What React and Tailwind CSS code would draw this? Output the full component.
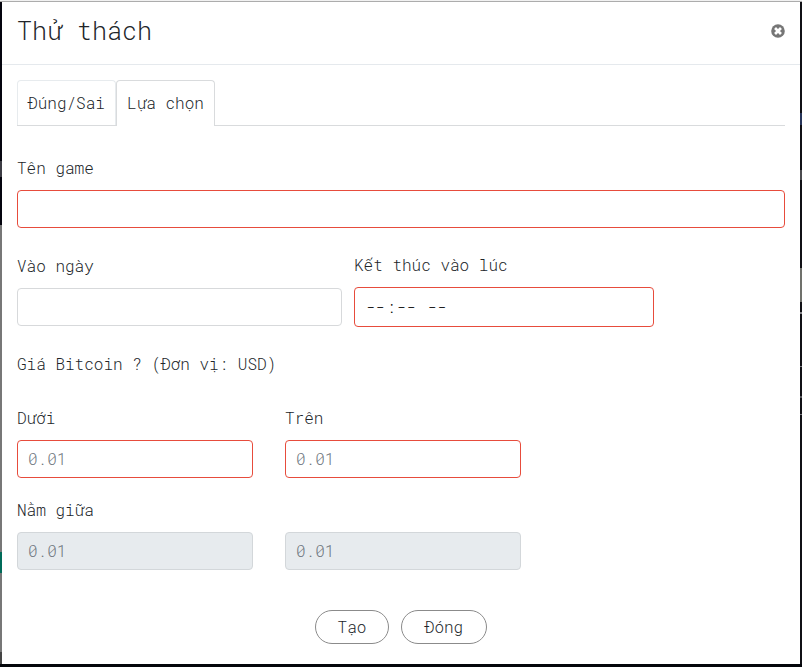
const fieldBase = "h-[38px] rounded-[4px] border px-[10px] pb-[2px] text-base outline-none placeholder:text-[#6c757d] placeholder:opacity-100";

function Field({ label, invalid = false, disabled = false, placeholder, className }) {
  const tone = disabled
    ? "border-[#d3d7da] bg-[#e7ebee]"
    : invalid
      ? "border-[#e74c3c] bg-white"
      : "border-[#d7d9db] bg-white";
  return (
    <label className={`flex flex-col ${className}`}>
      <span className="mb-[10px] h-6 leading-6 whitespace-pre">{label}</span>
      <input
        type="text"
        disabled={disabled}
        placeholder={placeholder}
        className={`${fieldBase} ${tone} w-full`}
      />
    </label>
  );
}

function TimeField({ label }) {
  return (
    <div className="flex w-[300px] flex-col">
      <span className="mb-[10px] h-6 leading-6">{label}</span>
      <div className="flex h-10 items-center rounded-[4px] border border-[#e74c3c] px-[11px] text-black">
        <span>--</span>
        <span className="px-px">:</span>
        <span>--</span>
        <span className="ml-[11.6px]">--</span>
      </div>
    </div>
  );
}

function CloseIcon() {
  return (
    <svg width="14" height="14" viewBox="0 0 14 14" aria-hidden="true">
      <circle cx="7" cy="7" r="6.8" fill="#767676" />
      <path d="M5 5 9 9M9 5 5 9" stroke="#fff" strokeWidth="2.7" strokeLinecap="square" />
    </svg>
  );
}

function LeftEdge() {
  return (
    <div className="flex w-[2px] flex-none flex-col bg-[#777777]">
      <div className="h-[159px] bg-[#04040e]" />
      <div className="h-[16px] bg-[#3c3c44]" />
      <div className="h-[48px] bg-[#04040e]" />
      <div className="h-[327px] bg-[#777777]" />
      <div className="h-[21px] bg-[#006b59]" />
      <div className="h-[79px] bg-[#777777]" />
      <div className="flex-1 bg-[#444444]" />
    </div>
  );
}

function RightEdge() {
  return (
    <div className="flex w-[2px] flex-none flex-col bg-[#101015]">
      <div className="mt-[111px] h-[12px] bg-[#27355a]" />
      <div className="mt-[45px] h-[10px] bg-[#4b4b4f]" />
      <div className="mt-[88px] h-[34px] bg-[#70716c]" />
      <div className="mt-[10px] h-[2px] bg-[#85858a]" />
      <div className="mt-[52px] h-px bg-[#77777c]" />
      <div className="mt-[29px] h-[2px] bg-[#55555a]" />
      <div className="mt-[16px] h-px bg-[#77777c]" />
    </div>
  );
}

export default function App() {
  return (
    <div className="flex h-[667px] w-[802px] flex-col overflow-hidden bg-[#04060b] font-['Roboto_Mono','Liberation_Mono',monospace] text-base font-light text-[#212529]">
      <div className="h-[2px] flex-none border-b border-[#acacac] bg-[#f1f1f1]" />
      <div className="flex h-[662px] flex-none">
        <LeftEdge />
        <main className="flex w-[798px] flex-col bg-white">
          <header className="flex h-[63px] flex-none items-start justify-between border-b border-[#e5e9ed] pr-[15px] pl-[15px]">
            <h1 className="mt-[11px] text-[25px] leading-9 text-[#212529]">Thử thách</h1>
            <button type="button" aria-label="Đóng" className="mt-[22px]">
              <CloseIcon />
            </button>
          </header>

          <nav className="mx-[15px] mt-[15px] flex h-[46px] flex-none border-b border-[#d9dbdd]">
            <button type="button" className="h-[45px] w-[99px] rounded-t-[4px] border border-b-0 border-[#e7ebee]">
              Đúng/Sai
            </button>
            <button type="button" className="h-[46px] w-[99px] rounded-t-[4px] border border-b-0 border-[#d9dbdd] bg-white pb-[2px]">
              Lựa chọn
            </button>
          </nav>

          <form className="flex flex-col px-[15px] pt-[30px]">
            <Field label="Tên game" invalid className="w-[768px]" />

            <div className="mt-[25px] flex gap-3">
              <Field label="Vào ngày" className="mt-[1px] w-[325px]" />
              <TimeField label="Kết thúc vào lúc" />
            </div>

            <p className="mt-[25px] h-6 leading-6">Giá Bitcoin ? (Đơn vị: USD)</p>

            <div className="mt-[30px] flex gap-8">
              <Field label="Dưới" invalid placeholder="0.01" className="w-[236px]" />
              <Field label="Trên" invalid placeholder="0.01" className="w-[236px]" />
            </div>
            <div className="mt-[20px] flex gap-8">
              <Field label="Nằm giữa" disabled placeholder="0.01" className="w-[236px]" />
              <Field label=" " disabled placeholder="0.01" className="w-[236px]" />
            </div>

            <div className="mt-[40px] flex justify-center gap-3">
              <button type="button" className="h-[34px] w-[74px] rounded-full border border-[#8b8b8b] text-[#212529]">
                Tạo
              </button>
              <button type="button" className="h-[34px] w-[86px] rounded-full border border-[#8b8b8b] text-[#212529]">
                Đóng
              </button>
            </div>
          </form>
        </main>
        <RightEdge />
      </div>
    </div>
  );
}
